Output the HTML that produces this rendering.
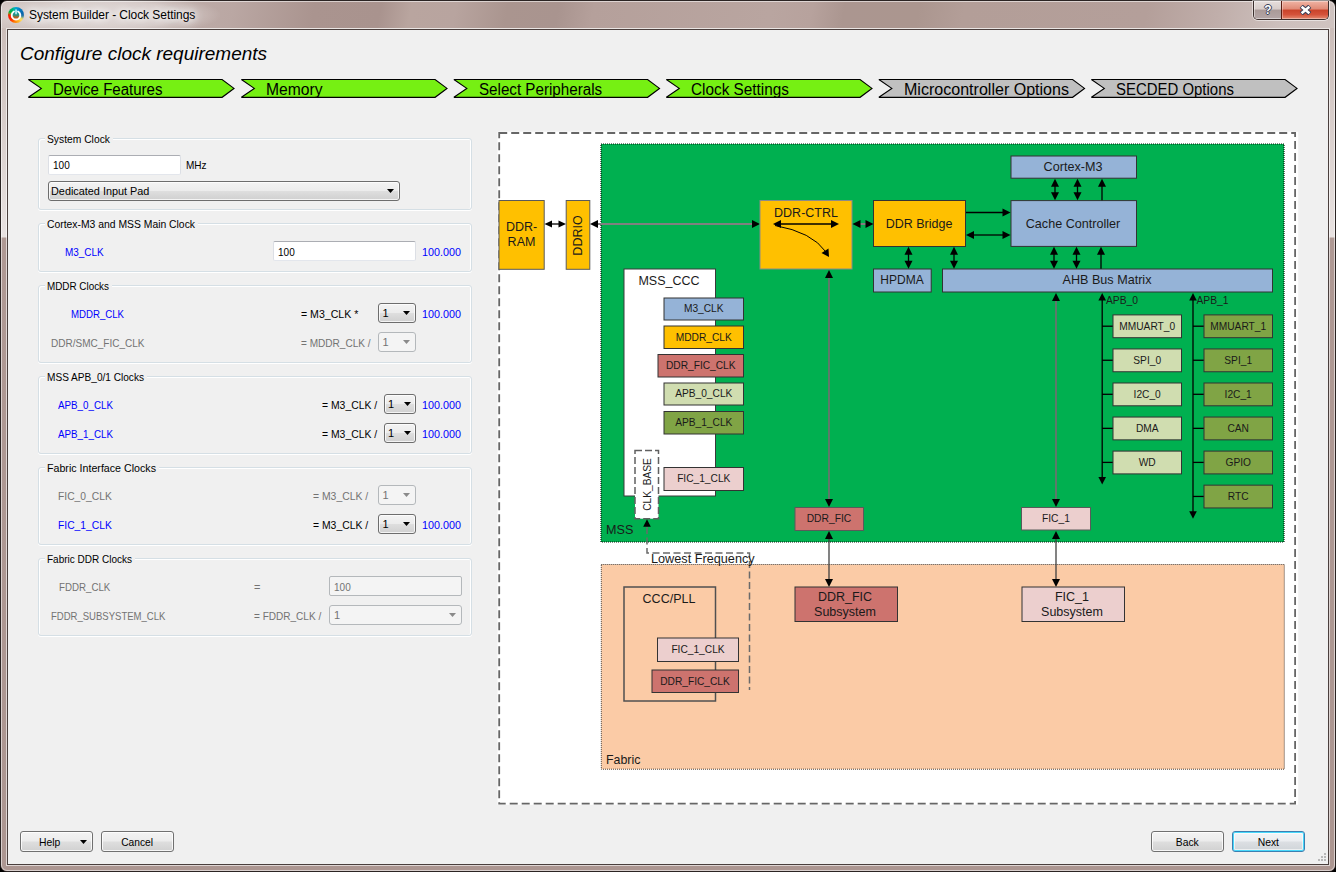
<!DOCTYPE html>
<html>
<head>
<meta charset="utf-8">
<title>System Builder - Clock Settings</title>
<style>
*{box-sizing:border-box;margin:0;padding:0}
html,body{width:1336px;height:872px;overflow:hidden;background:#000}
body{font-family:"Liberation Sans",sans-serif;font-size:11px;color:#000;position:relative}
.abs{position:absolute}
#frame{position:absolute;left:0;top:0;width:1336px;height:872px;border-radius:7px 7px 7px 7px;
 background:linear-gradient(100deg,#d2c6c3 0px,#c6b8b4 60px,#baa7a3 230px,#aa948f 310px,#a9938e 375px,#b9a59f 405px,#b8a49f 449px,#aa958f 500px,#a9948f 550px,#b5a09b 585px,#b9a5a0 760px,#b7a29d 800px,#ab9690 832px,#ab968f 905px,#b39e98 950px,#b49f9a 1130px,#c0aeaa 1200px,#cdc0bd 1265px,#d0c4c1 1336px);
 border:1px solid #2b2423;overflow:hidden}
#frame .hl{position:absolute;left:0;top:0;right:0;bottom:0;border:1px solid rgba(255,255,255,.55);border-radius:6px}
#sidefill{position:absolute;left:0;top:27px;width:1334px;height:843px;background:linear-gradient(to bottom,#cbbdb9 0,#d6cbc8 80px,#e8e2e1 209px,#af9994 210px,#ac9691 100%)}
#client{position:absolute;left:8px;top:30px;width:1320px;height:834px;background:#f0f0f0}
#cborder{position:absolute;left:6px;top:28px;width:1324px;height:838px;border:1px solid rgba(255,255,255,.6)}
#cborder2{position:absolute;left:7px;top:29px;width:1322px;height:836px;border:1px solid #4a3f3d}
#title{position:absolute;left:29px;top:7px;font-size:12px;letter-spacing:-.06px;line-height:16px;color:#000;white-space:nowrap;text-shadow:0 0 6px #fff,0 0 10px #fff,0 0 14px rgba(255,255,255,.9)}
#glow{position:absolute;left:-10px;top:-6px;width:230px;height:42px;background:radial-gradient(ellipse at center,rgba(255,255,255,.55) 0%,rgba(255,255,255,.35) 45%,rgba(255,255,255,0) 72%)}
h1{position:absolute;left:20px;top:43px;font-size:19px;line-height:22px;font-weight:normal;font-style:italic;white-space:nowrap}
.ct{position:absolute;top:81px;margin-left:.8px;font-size:16px;line-height:18px;white-space:nowrap}
.btn{position:absolute;top:831px;height:21px;border:1px solid #707070;border-radius:3px;
 background:linear-gradient(#f3f3f3 0%,#ececec 48%,#dedede 52%,#d1d1d1 100%);box-shadow:inset 0 0 0 1px rgba(255,255,255,.8);
 font-size:11px;line-height:19px;padding-top:1px;text-align:center}
</style>
</head>
<body>
<div id="frame">
 <div id="sidefill"></div>
 <div class="hl"></div>
</div>
<div id="glow"></div>
<div id="cborder"></div>
<div id="cborder2"></div>
<div id="client"></div>

<!-- title bar -->
<div class="abs" style="left:7.8px;top:6.6px;width:16.4px;height:16.4px;border-radius:50%;background:conic-gradient(from 0deg,#00a4d6 0deg,#0078c0 35deg,#005fa8 80deg,#2a78a0 100deg,#c8cc70 118deg,#ffe060 132deg,#ffb020 160deg,#ff7800 195deg,#ff3000 225deg,#ff1400 255deg,#e83000 272deg,#6a9a20 284deg,#00b040 298deg,#00b46c 325deg,#00b0b0 345deg,#00a4d6 360deg)"></div>
<svg class="abs" style="left:7px;top:6px" width="18" height="18" viewBox="0 0 18 18">
 <defs><linearGradient id="ig" x1="0" y1="0" x2="0" y2="1"><stop offset="0" stop-color="#10a4b4"/><stop offset=".45" stop-color="#2a9080"/><stop offset=".62" stop-color="#a06a30"/><stop offset="1" stop-color="#e85010"/></linearGradient></defs>
 <circle cx="9" cy="9.7" r="4.4" fill="url(#ig)"/>
 <path d="M6.9 5.5 A4.3 4.3 0 1 0 11.1 5.5" fill="none" stroke="#fff" stroke-width="1.9" stroke-linecap="round"/>
 <rect x="8.2" y="3.2" width="1.7" height="5.2" rx=".8" fill="#c4ecf2"/>
</svg>
<div id="title">System Builder - Clock Settings</div>

<!-- caption buttons -->
<div class="abs" style="left:1253px;top:1px;width:76px;height:19px;border:1px solid #3c2f2d;border-top:none;border-radius:0 0 5px 5px;overflow:hidden;box-shadow:0 0 0 1px rgba(255,255,255,.5)">
 <div class="abs" style="left:0;top:0;width:28px;height:18px;background:linear-gradient(#e6dedc 0%,#d8cdca 45%,#aa9a98 50%,#b4a6a6 100%);box-shadow:inset 0 0 0 1px rgba(255,255,255,.45)"></div>
 <div class="abs" style="left:27px;top:0;width:48px;height:18px;border-left:1px solid #5a1c10;background:linear-gradient(#f0b4a4 0%,#e08a76 45%,#c9432a 50%,#d4523a 75%,#e48a70 100%);box-shadow:inset 0 0 0 1px rgba(255,255,255,.35)"></div>
</div>
<div class="abs" style="left:1261px;top:2px;width:14px;height:16px;font-size:12px;line-height:16px;font-weight:bold;text-align:center;color:#fff;text-shadow:-1px 0 #3a4058,1px 0 #3a4058,0 -1px #3a4058,0 1px #3a4058">?</div>
<svg class="abs" style="left:1299px;top:5px" width="13" height="10" viewBox="0 0 13 10"><path d="M2.2 1.3 L10.8 8.7 M10.8 1.3 L2.2 8.7" stroke="#3a4058" stroke-width="4.6" stroke-linecap="butt"/><path d="M2.6 1.7 L10.4 8.3 M10.4 1.7 L2.6 8.3" stroke="#fff" stroke-width="2.5"/></svg>

<h1>Configure clock requirements</h1>

<!-- chevrons -->
<div id="chevs">
<svg class="abs" style="left:0;top:70px" width="1336" height="40" viewBox="0 70 1336 40">
<path d="M28.40 79.5 H222.10 L234.00 88.4 L222.10 97.3 H28.40 L41.30 88.4 Z" fill="#76f013" stroke="#000" stroke-width="1.15" stroke-linejoin="miter" stroke-miterlimit="2.2"/>
<path d="M241.40 79.5 H435.10 L447.00 88.4 L435.10 97.3 H241.40 L254.30 88.4 Z" fill="#76f013" stroke="#000" stroke-width="1.15" stroke-linejoin="miter" stroke-miterlimit="2.2"/>
<path d="M453.90 79.5 H647.60 L659.50 88.4 L647.60 97.3 H453.90 L466.80 88.4 Z" fill="#76f013" stroke="#000" stroke-width="1.15" stroke-linejoin="miter" stroke-miterlimit="2.2"/>
<path d="M666.35 79.5 H860.05 L871.95 88.4 L860.05 97.3 H666.35 L679.25 88.4 Z" fill="#76f013" stroke="#000" stroke-width="1.15" stroke-linejoin="miter" stroke-miterlimit="2.2"/>
<path d="M878.90 79.5 H1072.60 L1084.50 88.4 L1072.60 97.3 H878.90 L891.80 88.4 Z" fill="#c0c0c0" stroke="#000" stroke-width="1.15" stroke-linejoin="miter" stroke-miterlimit="2.2"/>
<path d="M1091.40 79.5 H1285.10 L1297.00 88.4 L1285.10 97.3 H1091.40 L1104.30 88.4 Z" fill="#c0c0c0" stroke="#000" stroke-width="1.15" stroke-linejoin="miter" stroke-miterlimit="2.2"/>
</svg>
<div class="ct" style="left:52.4px"><span id="c0" class="sx" style="transform:scaleX(0.940)">Device Features</span></div>
<div class="ct" style="left:265.4px"><span id="c1" class="sx" style="transform:scaleX(0.978)">Memory</span></div>
<div class="ct" style="left:477.9px"><span id="c2" class="sx" style="transform:scaleX(0.948)">Select Peripherals</span></div>
<div class="ct" style="left:690.3px"><span id="c3" class="sx" style="transform:scaleX(0.958)">Clock Settings</span></div>
<div class="ct" style="left:902.9px"><span id="c4" class="sx" style="transform:scaleX(1.003)">Microcontroller Options</span></div>
<div class="ct" style="left:1115.4px"><span id="c5" class="sx" style="transform:scaleX(0.934)">SECDED Options</span></div>
</div>

<!-- LEFTPANEL -->
<style>
.gb{position:absolute;left:38px;width:434px;border:1px solid #d5dfe5;border-radius:3px;box-shadow:0 1px 0 #fff,inset 1px 1px 0 #fff,inset -1px 0 0 #fff}
.gt{position:absolute;left:44.8px;height:14px;line-height:14px;padding:0 2px;background:#f0f0f0;white-space:nowrap}
.t{position:absolute;height:14px;line-height:14px;white-space:nowrap}
.bl{color:#0000ff}
.gr{color:#737373}
.inp{position:absolute;height:20px;background:#fff;border:1px solid #e3e6ec;border-top-color:#abadb3;border-left-color:#dcdfe5;border-right-color:#dcdfe5;border-radius:2px}
.cb{position:absolute;height:20px;border:1px solid #6d6d6d;border-radius:3px;background:linear-gradient(#f3f3f3 0%,#ececec 48%,#dedede 52%,#d0d0d0 100%);box-shadow:inset 0 0 0 1px rgba(255,255,255,.75)}
.cbd{position:absolute;height:20px;border:1px solid #b4b8bb;border-radius:3px;background:#f4f4f4}
.sx{display:inline-block;transform-origin:0 50%}
.ar{position:absolute;width:7px;height:4px}
</style>
<div id="left">
<div class="gb" style="top:138px;height:72px"></div>
<div class="gt" style="top:132px;width:68px"><span id="g1" class="sx" style="transform:scaleX(0.936)">System Clock</span></div>
<div class="inp" style="left:48px;top:155px;width:133px"></div>
<div class="t" style="left:53px;top:158px"><span class="sx" style="transform:scaleX(.91)">100</span></div>
<div class="t" style="left:186px;top:158px"><span class="sx" style="transform:scaleX(.91)">MHz</span></div>
<div class="cb" style="left:48px;top:181px;width:352px"></div>
<div class="t" style="left:51px;top:184px"><span id="s1" class="sx" style="transform:scaleX(0.987)">Dedicated Input Pad</span></div>
<svg class="ar" style="left:387px;top:189px"><path d="M0 0 H7 L3.5 4 Z" fill="#000"/></svg>

<div class="gb" style="top:223px;height:49px"></div>
<div class="gt" style="top:217px;width:153px"><span id="g2" class="sx" style="transform:scaleX(0.942)">Cortex-M3 and MSS Main Clock</span></div>
<div class="t bl" style="left:65px;top:245px"><span id="s2" class="sx" style="transform:scaleX(0.904)">M3_CLK</span></div>
<div class="inp" style="left:273px;top:241px;width:143px"></div>
<div class="t" style="left:278px;top:245px"><span class="sx" style="transform:scaleX(.91)">100</span></div>
<div class="t bl" style="left:422px;top:245px"><span class="v sx" style="transform:scaleX(.98)">100.000</span></div>

<div class="gb" style="top:285px;height:78px"></div>
<div class="gt" style="top:279px;width:67px"><span id="g3" class="sx" style="transform:scaleX(0.897)">MDDR Clocks</span></div>
<div class="t bl" style="left:71px;top:307px"><span id="s3" class="sx" style="transform:scaleX(0.876)">MDDR_CLK</span></div>
<div class="t" style="left:301px;top:307px"><span id="s4" class="sx" style="transform:scaleX(0.961)">= M3_CLK *</span></div>
<div class="cb" style="left:378px;top:303px;width:38px"></div>
<div class="t" style="left:382.5px;top:306px">1</div>
<svg class="ar" style="left:403px;top:311px"><path d="M0 0 H7 L3.5 4 Z" fill="#000"/></svg>
<div class="t bl" style="left:422px;top:307px"><span class="v sx" style="transform:scaleX(.98)">100.000</span></div>
<div class="t gr" style="left:51px;top:336px"><span id="s5" class="sx" style="transform:scaleX(0.910)">DDR/SMC_FIC_CLK</span></div>
<div class="t gr" style="left:301px;top:336px"><span id="s6" class="sx" style="transform:scaleX(0.915)">= MDDR_CLK /</span></div>
<div class="cbd" style="left:378px;top:332px;width:38px"></div>
<div class="t gr" style="left:382.5px;top:335px">1</div>
<svg class="ar" style="left:403px;top:340px"><path d="M0 0 H7 L3.5 4 Z" fill="#8a8a8a"/></svg>

<div class="gb" style="top:376px;height:78px"></div>
<div class="gt" style="top:370px;width:102px"><span id="g4" class="sx" style="transform:scaleX(0.917)">MSS APB_0/1 Clocks</span></div>
<div class="t bl" style="left:58px;top:398px"><span id="s7" class="sx" style="transform:scaleX(0.890)">APB_0_CLK</span></div>
<div class="t" style="left:322px;top:398px"><span id="s8" class="sx" style="transform:scaleX(0.945)">= M3_CLK /</span></div>
<div class="cb" style="left:384px;top:394px;width:32px"></div>
<div class="t" style="left:388px;top:397px">1</div>
<svg class="ar" style="left:404px;top:402px"><path d="M0 0 H7 L3.5 4 Z" fill="#000"/></svg>
<div class="t bl" style="left:422px;top:398px"><span class="v sx" style="transform:scaleX(.98)">100.000</span></div>
<div class="t bl" style="left:58px;top:427px"><span id="s9" class="sx" style="transform:scaleX(0.890)">APB_1_CLK</span></div>
<div class="t" style="left:322px;top:427px"><span id="s10" class="sx" style="transform:scaleX(0.945)">= M3_CLK /</span></div>
<div class="cb" style="left:384px;top:423px;width:32px"></div>
<div class="t" style="left:388px;top:426px">1</div>
<svg class="ar" style="left:404px;top:431px"><path d="M0 0 H7 L3.5 4 Z" fill="#000"/></svg>
<div class="t bl" style="left:422px;top:427px"><span class="v sx" style="transform:scaleX(.98)">100.000</span></div>

<div class="gb" style="top:467px;height:78px"></div>
<div class="gt" style="top:461px;width:114px"><span id="g5" class="sx" style="transform:scaleX(0.969)">Fabric Interface Clocks</span></div>
<div class="t gr" style="left:58px;top:489px"><span id="s11" class="sx" style="transform:scaleX(0.936)">FIC_0_CLK</span></div>
<div class="t gr" style="left:313px;top:489px"><span id="s12" class="sx" style="transform:scaleX(0.945)">= M3_CLK /</span></div>
<div class="cbd" style="left:378px;top:485px;width:38px"></div>
<div class="t gr" style="left:382.5px;top:488px">1</div>
<svg class="ar" style="left:403px;top:493px"><path d="M0 0 H7 L3.5 4 Z" fill="#8a8a8a"/></svg>
<div class="t bl" style="left:58px;top:518px"><span id="s13" class="sx" style="transform:scaleX(0.936)">FIC_1_CLK</span></div>
<div class="t" style="left:313px;top:518px"><span id="s14" class="sx" style="transform:scaleX(0.945)">= M3_CLK /</span></div>
<div class="cb" style="left:378px;top:514px;width:38px"></div>
<div class="t" style="left:382.5px;top:517px">1</div>
<svg class="ar" style="left:403px;top:522px"><path d="M0 0 H7 L3.5 4 Z" fill="#000"/></svg>
<div class="t bl" style="left:422px;top:518px"><span class="v sx" style="transform:scaleX(.98)">100.000</span></div>

<div class="gb" style="top:558px;height:78px"></div>
<div class="gt" style="top:552px;width:90px"><span id="g6" class="sx" style="transform:scaleX(0.909)">Fabric DDR Clocks</span></div>
<div class="t gr" style="left:59px;top:580px"><span id="s15" class="sx" style="transform:scaleX(0.883)">FDDR_CLK</span></div>
<div class="t gr" style="left:254px;top:580px">=</div>
<div class="cbd" style="left:329px;top:576px;width:133px;border-radius:2px"></div>
<div class="t gr" style="left:334px;top:580px"><span class="sx" style="transform:scaleX(.91)">100</span></div>
<div class="t gr" style="left:51px;top:609px"><span id="s16" class="sx" style="transform:scaleX(0.866)">FDDR_SUBSYSTEM_CLK</span></div>
<div class="t gr" style="left:254px;top:609px"><span id="s17" class="sx" style="transform:scaleX(0.912)">= FDDR_CLK /</span></div>
<div class="cbd" style="left:329px;top:605px;width:133px"></div>
<div class="t gr" style="left:334px;top:608px">1</div>
<svg class="ar" style="left:449px;top:613px"><path d="M0 0 H7 L3.5 4 Z" fill="#8a8a8a"/></svg>
</div>
<!-- /LEFTPANEL -->

<!-- DIAGRAM -->
<svg class="abs" style="left:490px;top:120px" width="820" height="700" viewBox="0 0 820 700" font-family="Liberation Sans, sans-serif">
<rect x="7.600000000000023" y="11.699999999999989" width="800.6" height="673.0999999999999" fill="#fff"/>
<rect x="9.20" y="13.00" width="795.90" height="670.70" fill="#fff" stroke="#666666" stroke-width="1.8" stroke-dasharray="8 4"/>
<rect x="111.00" y="24.00" width="683.00" height="398.00" fill="#00b050" stroke="#001a08" stroke-width="1.2" stroke-dasharray="1 1"/>
<rect x="111.30" y="444.50" width="683.00" height="204.70" fill="#fbcba6" stroke="#4a4038" stroke-width="1" stroke-dasharray="1 1"/>
<text x="116.00" y="413.50" font-size="12.6" text-anchor="start" fill="#1a1a1a" >MSS</text>
<text x="116.00" y="644.00" font-size="12.4" text-anchor="start" fill="#1a1a1a" >Fabric</text>
<rect x="9.00" y="80.50" width="45.20" height="68.80" fill="#ffc000" stroke="#5a5a5a" stroke-width="1" />
<text x="31.50" y="111.00" font-size="12.5" text-anchor="middle" fill="#1a1a1a" >DDR-</text>
<text x="31.50" y="126.00" font-size="12.5" text-anchor="middle" fill="#1a1a1a" >RAM</text>
<rect x="76.20" y="80.50" width="23.60" height="68.80" fill="#ffc000" stroke="#5a5a5a" stroke-width="1" />
<text transform="translate(92,115.5) rotate(-90)" font-size="12.5" text-anchor="middle" fill="#1a1a1a">DDRIO</text>
<line x1="61.00" y1="104.00" x2="69.50" y2="104.00" stroke="#000" stroke-width="1.3" />
<polygon points="54.50,104.00 62.00,100.40 62.00,107.60" fill="#000"/>
<polygon points="76.00,104.00 68.50,100.40 68.50,107.60" fill="#000"/>
<line x1="106.00" y1="104.00" x2="264.00" y2="104.00" stroke="#808080" stroke-width="2" />
<polygon points="100.00,104.00 108.00,100.00 108.00,108.00" fill="#000"/>
<polygon points="270.00,104.00 262.00,100.00 262.00,108.00" fill="#000"/>
<rect x="270.00" y="80.50" width="92.00" height="68.50" fill="#ffc000" stroke="#8a8a8a" stroke-width="1" />
<text x="316.00" y="97.00" font-size="12.5" text-anchor="middle" fill="#1a1a1a" >DDR-CTRL</text>
<line x1="290.00" y1="104.00" x2="342.00" y2="104.00" stroke="#000" stroke-width="1.3" />
<polygon points="283.00,104.00 291.00,100.00 291.00,108.00" fill="#000"/>
<polygon points="349.00,104.00 341.00,100.00 341.00,108.00" fill="#000"/>
<path d="M285 105.5 Q322 112 336 132" fill="none" stroke="#000" stroke-width="1"/>
<polygon points="339,137 331.5,133 338.5,128.5" fill="#000"/>
<line x1="368.00" y1="104.00" x2="378.00" y2="104.00" stroke="#808080" stroke-width="2" />
<polygon points="362.50,104.00 370.50,100.00 370.50,108.00" fill="#000"/>
<polygon points="383.50,104.00 375.50,100.00 375.50,108.00" fill="#000"/>
<rect x="383.50" y="80.50" width="92.00" height="46.00" fill="#ffc000" stroke="#333333" stroke-width="1" />
<text x="429.00" y="108.00" font-size="12.5" text-anchor="middle" fill="#1a1a1a" >DDR Bridge</text>
<rect x="383.50" y="149.00" width="57.70" height="23.00" fill="#95b3d7" stroke="#333333" stroke-width="1" />
<text x="412.00" y="164.00" font-size="12" text-anchor="middle" fill="#1a1a1a" >HPDMA</text>
<rect x="521.00" y="36.00" width="125.50" height="22.20" fill="#95b3d7" stroke="#333333" stroke-width="1" />
<text x="583.00" y="50.70" font-size="12.6" text-anchor="middle" fill="#1a1a1a" >Cortex-M3</text>
<rect x="521.00" y="80.60" width="125.50" height="45.80" fill="#95b3d7" stroke="#333333" stroke-width="1" />
<text x="583.00" y="107.60" font-size="12.6" text-anchor="middle" fill="#1a1a1a" >Cache Controller</text>
<rect x="452.50" y="149.00" width="330.00" height="23.00" fill="#95b3d7" stroke="#333333" stroke-width="1" />
<text x="617.00" y="164.00" font-size="12.6" text-anchor="middle" fill="#1a1a1a" >AHB Bus Matrix</text>
<line x1="565.00" y1="65.70" x2="565.00" y2="73.30" stroke="#000" stroke-width="1.3" />
<polygon points="565.00,58.70 561.00,66.70 569.00,66.70" fill="#000"/>
<polygon points="565.00,80.30 561.00,72.30 569.00,72.30" fill="#000"/>
<line x1="587.50" y1="65.70" x2="587.50" y2="73.30" stroke="#000" stroke-width="1.3" />
<polygon points="587.50,58.70 583.50,66.70 591.50,66.70" fill="#000"/>
<polygon points="587.50,80.30 583.50,72.30 591.50,72.30" fill="#000"/>
<line x1="612.00" y1="65.70" x2="612.00" y2="80.30" stroke="#000" stroke-width="1.3" />
<polygon points="612.00,58.70 608.00,66.70 616.00,66.70" fill="#000"/>
<line x1="564.00" y1="133.80" x2="564.00" y2="141.70" stroke="#000" stroke-width="1.3" />
<polygon points="564.00,126.80 560.00,134.80 568.00,134.80" fill="#000"/>
<polygon points="564.00,148.70 560.00,140.70 568.00,140.70" fill="#000"/>
<line x1="586.50" y1="133.80" x2="586.50" y2="141.70" stroke="#000" stroke-width="1.3" />
<polygon points="586.50,126.80 582.50,134.80 590.50,134.80" fill="#000"/>
<polygon points="586.50,148.70 582.50,140.70 590.50,140.70" fill="#000"/>
<line x1="611.00" y1="133.80" x2="611.00" y2="148.70" stroke="#000" stroke-width="1.3" />
<polygon points="611.00,126.80 607.00,134.80 615.00,134.80" fill="#000"/>
<line x1="476.00" y1="92.50" x2="513.50" y2="92.50" stroke="#000" stroke-width="1.3" />
<polygon points="520.50,92.50 512.50,88.50 512.50,96.50" fill="#000"/>
<line x1="483.00" y1="115.00" x2="513.50" y2="115.00" stroke="#000" stroke-width="1.3" />
<polygon points="476.00,115.00 484.00,111.00 484.00,119.00" fill="#000"/>
<polygon points="520.50,115.00 512.50,111.00 512.50,119.00" fill="#000"/>
<line x1="418.50" y1="133.80" x2="418.50" y2="141.70" stroke="#000" stroke-width="1.3" />
<polygon points="418.50,126.80 414.50,134.80 422.50,134.80" fill="#000"/>
<polygon points="418.50,148.70 414.50,140.70 422.50,140.70" fill="#000"/>
<line x1="464.00" y1="133.80" x2="464.00" y2="141.70" stroke="#000" stroke-width="1.3" />
<polygon points="464.00,126.80 460.00,134.80 468.00,134.80" fill="#000"/>
<polygon points="464.00,148.70 460.00,140.70 468.00,140.70" fill="#000"/>
<rect x="134.00" y="149.00" width="91.50" height="227.00" fill="#fff" stroke="#3a3a3a" stroke-width="1" />
<text x="179.00" y="165.00" font-size="12.5" text-anchor="middle" fill="#1a1a1a" >MSS_CCC</text>
<rect x="174.00" y="178.00" width="79.50" height="22.00" fill="#95b3d7" stroke="#333333" stroke-width="1" />
<text x="213.75" y="192.30" font-size="10.2" text-anchor="middle" fill="#1a1a1a" >M3_CLK</text>
<rect x="174.00" y="206.00" width="79.50" height="22.50" fill="#ffc000" stroke="#333333" stroke-width="1" />
<text x="213.75" y="220.55" font-size="10.2" text-anchor="middle" fill="#1a1a1a" >MDDR_CLK</text>
<rect x="168.00" y="234.50" width="85.50" height="22.50" fill="#cd736e" stroke="#333333" stroke-width="1" />
<text x="210.75" y="249.05" font-size="10.2" text-anchor="middle" fill="#1a1a1a" >DDR_FIC_CLK</text>
<rect x="174.00" y="263.00" width="79.50" height="22.00" fill="#d0ddb0" stroke="#333333" stroke-width="1" />
<text x="213.75" y="277.30" font-size="10.2" text-anchor="middle" fill="#1a1a1a" >APB_0_CLK</text>
<rect x="174.00" y="291.50" width="79.50" height="22.50" fill="#80a445" stroke="#333333" stroke-width="1" />
<text x="213.75" y="306.05" font-size="10.2" text-anchor="middle" fill="#1a1a1a" >APB_1_CLK</text>
<rect x="174.00" y="347.50" width="79.50" height="23.00" fill="#eccfce" stroke="#333333" stroke-width="1" />
<text x="213.75" y="362.30" font-size="10.2" text-anchor="middle" fill="#1a1a1a" >FIC_1_CLK</text>
<rect x="145.00" y="330.50" width="23.50" height="68.20" fill="#fff" stroke="#606060" stroke-width="1.5" stroke-dasharray="7 3"/>
<text transform="translate(161,364.5) rotate(-90)" font-size="10.2" text-anchor="middle" fill="#1a1a1a">CLK_BASE</text>
<polygon points="157.00,399.30 153.20,406.80 160.80,406.80" fill="#000"/>
<path d="M157 407 V433 H259.5 V570" fill="none" stroke="#6a6a6a" stroke-width="1.5" stroke-dasharray="7 3.5"/>
<text x="161.00" y="443.00" font-size="12.7" text-anchor="start" fill="#1a1a1a" >Lowest Frequency</text>
<line x1="339.00" y1="157.00" x2="339.00" y2="380.00" stroke="#707070" stroke-width="1.7" />
<polygon points="339.00,150.00 335.00,158.00 343.00,158.00" fill="#000"/>
<polygon points="339.00,387.00 335.00,379.00 343.00,379.00" fill="#000"/>
<rect x="305.00" y="387.50" width="68.50" height="23.00" fill="#cd736e" stroke="#5a5a5a" stroke-width="1" />
<text x="339.00" y="401.70" font-size="10.3" text-anchor="middle" fill="#1a1a1a" >DDR_FIC</text>
<line x1="566.00" y1="180.00" x2="566.00" y2="380.00" stroke="#707070" stroke-width="1.7" />
<polygon points="566.00,173.00 562.00,181.00 570.00,181.00" fill="#000"/>
<polygon points="566.00,387.00 562.00,379.00 570.00,379.00" fill="#000"/>
<rect x="531.50" y="387.50" width="69.00" height="22.50" fill="#eccfce" stroke="#5a5a5a" stroke-width="1" />
<text x="566.00" y="401.70" font-size="10.3" text-anchor="middle" fill="#1a1a1a" >FIC_1</text>
<line x1="339.00" y1="418.00" x2="339.00" y2="460.00" stroke="#404040" stroke-width="1.3" />
<polygon points="339.00,411.00 335.00,419.00 343.00,419.00" fill="#000"/>
<polygon points="339.00,467.00 335.00,459.00 343.00,459.00" fill="#000"/>
<line x1="566.00" y1="418.00" x2="566.00" y2="460.00" stroke="#404040" stroke-width="1.3" />
<polygon points="566.00,411.00 562.00,419.00 570.00,419.00" fill="#000"/>
<polygon points="566.00,467.00 562.00,459.00 570.00,459.00" fill="#000"/>
<line x1="612.20" y1="179.50" x2="612.20" y2="358.00" stroke="#000" stroke-width="1.3" />
<polygon points="612.20,173.00 608.40,180.50 616.00,180.50" fill="#000"/>
<polygon points="612.20,364.50 608.40,357.00 616.00,357.00" fill="#000"/>
<line x1="703.00" y1="179.50" x2="703.00" y2="392.30" stroke="#000" stroke-width="1.3" />
<polygon points="703.00,173.00 699.20,180.50 706.80,180.50" fill="#000"/>
<polygon points="703.00,398.80 699.20,391.30 706.80,391.30" fill="#000"/>
<text x="616.00" y="183.50" font-size="10.3" text-anchor="start" fill="#1a1a1a" >APB_0</text>
<text x="706.50" y="183.50" font-size="10.3" text-anchor="start" fill="#1a1a1a" >APB_1</text>
<line x1="612.00" y1="206.20" x2="623.00" y2="206.20" stroke="#000" stroke-width="1.3" />
<rect x="623.00" y="194.90" width="68.50" height="22.80" fill="#d0ddb0" stroke="#333333" stroke-width="1" />
<text x="657.20" y="209.70" font-size="10.2" text-anchor="middle" fill="#1a1a1a" >MMUART_0</text>
<line x1="612.00" y1="240.25" x2="623.00" y2="240.25" stroke="#000" stroke-width="1.3" />
<rect x="623.00" y="228.95" width="68.50" height="22.80" fill="#d0ddb0" stroke="#333333" stroke-width="1" />
<text x="657.20" y="243.75" font-size="10.2" text-anchor="middle" fill="#1a1a1a" >SPI_0</text>
<line x1="612.00" y1="274.30" x2="623.00" y2="274.30" stroke="#000" stroke-width="1.3" />
<rect x="623.00" y="263.00" width="68.50" height="22.80" fill="#d0ddb0" stroke="#333333" stroke-width="1" />
<text x="657.20" y="277.80" font-size="10.2" text-anchor="middle" fill="#1a1a1a" >I2C_0</text>
<line x1="612.00" y1="308.35" x2="623.00" y2="308.35" stroke="#000" stroke-width="1.3" />
<rect x="623.00" y="297.05" width="68.50" height="22.80" fill="#d0ddb0" stroke="#333333" stroke-width="1" />
<text x="657.20" y="311.85" font-size="10.2" text-anchor="middle" fill="#1a1a1a" >DMA</text>
<line x1="612.00" y1="342.40" x2="623.00" y2="342.40" stroke="#000" stroke-width="1.3" />
<rect x="623.00" y="331.10" width="68.50" height="22.80" fill="#d0ddb0" stroke="#333333" stroke-width="1" />
<text x="657.20" y="345.90" font-size="10.2" text-anchor="middle" fill="#1a1a1a" >WD</text>
<line x1="703.00" y1="206.20" x2="714.00" y2="206.20" stroke="#000" stroke-width="1.3" />
<rect x="714.00" y="194.90" width="68.50" height="22.80" fill="#80a445" stroke="#333333" stroke-width="1" />
<text x="748.20" y="209.70" font-size="10.2" text-anchor="middle" fill="#1a1a1a" >MMUART_1</text>
<line x1="703.00" y1="240.25" x2="714.00" y2="240.25" stroke="#000" stroke-width="1.3" />
<rect x="714.00" y="228.95" width="68.50" height="22.80" fill="#80a445" stroke="#333333" stroke-width="1" />
<text x="748.20" y="243.75" font-size="10.2" text-anchor="middle" fill="#1a1a1a" >SPI_1</text>
<line x1="703.00" y1="274.30" x2="714.00" y2="274.30" stroke="#000" stroke-width="1.3" />
<rect x="714.00" y="263.00" width="68.50" height="22.80" fill="#80a445" stroke="#333333" stroke-width="1" />
<text x="748.20" y="277.80" font-size="10.2" text-anchor="middle" fill="#1a1a1a" >I2C_1</text>
<line x1="703.00" y1="308.35" x2="714.00" y2="308.35" stroke="#000" stroke-width="1.3" />
<rect x="714.00" y="297.05" width="68.50" height="22.80" fill="#80a445" stroke="#333333" stroke-width="1" />
<text x="748.20" y="311.85" font-size="10.2" text-anchor="middle" fill="#1a1a1a" >CAN</text>
<line x1="703.00" y1="342.40" x2="714.00" y2="342.40" stroke="#000" stroke-width="1.3" />
<rect x="714.00" y="331.10" width="68.50" height="22.80" fill="#80a445" stroke="#333333" stroke-width="1" />
<text x="748.20" y="345.90" font-size="10.2" text-anchor="middle" fill="#1a1a1a" >GPIO</text>
<line x1="703.00" y1="376.45" x2="714.00" y2="376.45" stroke="#000" stroke-width="1.3" />
<rect x="714.00" y="365.15" width="68.50" height="22.80" fill="#80a445" stroke="#333333" stroke-width="1" />
<text x="748.20" y="379.95" font-size="10.2" text-anchor="middle" fill="#1a1a1a" >RTC</text>
<rect x="134.00" y="467.00" width="91.50" height="114.00" fill="none" stroke="#505050" stroke-width="1.5" />
<text x="179.00" y="483.00" font-size="12.5" text-anchor="middle" fill="#1a1a1a" >CCC/PLL</text>
<rect x="167.50" y="518.00" width="81.00" height="23.50" fill="#eccfce" stroke="#333333" stroke-width="1" />
<text x="208.00" y="533.00" font-size="10.2" text-anchor="middle" fill="#1a1a1a" >FIC_1_CLK</text>
<rect x="162.00" y="550.00" width="86.50" height="22.50" fill="#cd736e" stroke="#333333" stroke-width="1" />
<text x="205.00" y="564.50" font-size="10.2" text-anchor="middle" fill="#1a1a1a" >DDR_FIC_CLK</text>
<rect x="305.00" y="467.00" width="102.50" height="34.50" fill="#cd736e" stroke="#333333" stroke-width="1" />
<text x="355.00" y="480.50" font-size="12.5" text-anchor="middle" fill="#1a1a1a" >DDR_FIC</text>
<text x="355.00" y="495.50" font-size="12.5" text-anchor="middle" fill="#1a1a1a" >Subsystem</text>
<rect x="532.00" y="467.00" width="102.50" height="34.50" fill="#eccfce" stroke="#333333" stroke-width="1" />
<text x="582.00" y="480.50" font-size="12.5" text-anchor="middle" fill="#1a1a1a" >FIC_1</text>
<text x="582.00" y="495.50" font-size="12.5" text-anchor="middle" fill="#1a1a1a" >Subsystem</text>
</svg>
<!-- /DIAGRAM -->

<!-- bottom buttons -->
<div class="btn" style="left:20px;width:73px;text-align:left;padding-left:18px"><span class="sx" style="transform:scaleX(.94)">Help</span><svg class="abs" style="left:59px;top:8px" width="8" height="5"><path d="M0 0 H7 L3.5 4 Z" fill="#000"/></svg></div>
<div class="btn" style="left:101px;width:73px"><span class="sx" style="transform:scaleX(.93);transform-origin:50% 50%">Cancel</span></div>
<div class="btn" style="left:1151px;width:73px"><span class="sx" style="transform:scaleX(.94);transform-origin:50% 50%">Back</span></div>
<div class="btn" style="left:1232px;width:73px;border-color:#3c7fb1;box-shadow:inset 0 0 0 1px #48d8fb,inset 0 0 0 2px rgba(255,255,255,.6);background:linear-gradient(#f2f4f6 0%,#ebedf0 48%,#dcdfe3 52%,#cfd4d8 100%)"><span class="sx" style="transform:scaleX(.94);transform-origin:50% 50%">Next</span></div>
<!-- size grip -->
<svg class="abs" style="left:1316px;top:853px" width="11" height="11"><g fill="#b8b8b8"><rect x="8" y="0" width="2" height="2"/><rect x="5" y="3" width="2" height="2"/><rect x="8" y="3" width="2" height="2"/><rect x="2" y="6" width="2" height="2"/><rect x="5" y="6" width="2" height="2"/><rect x="8" y="6" width="2" height="2"/></g></svg>
</body>
</html>
